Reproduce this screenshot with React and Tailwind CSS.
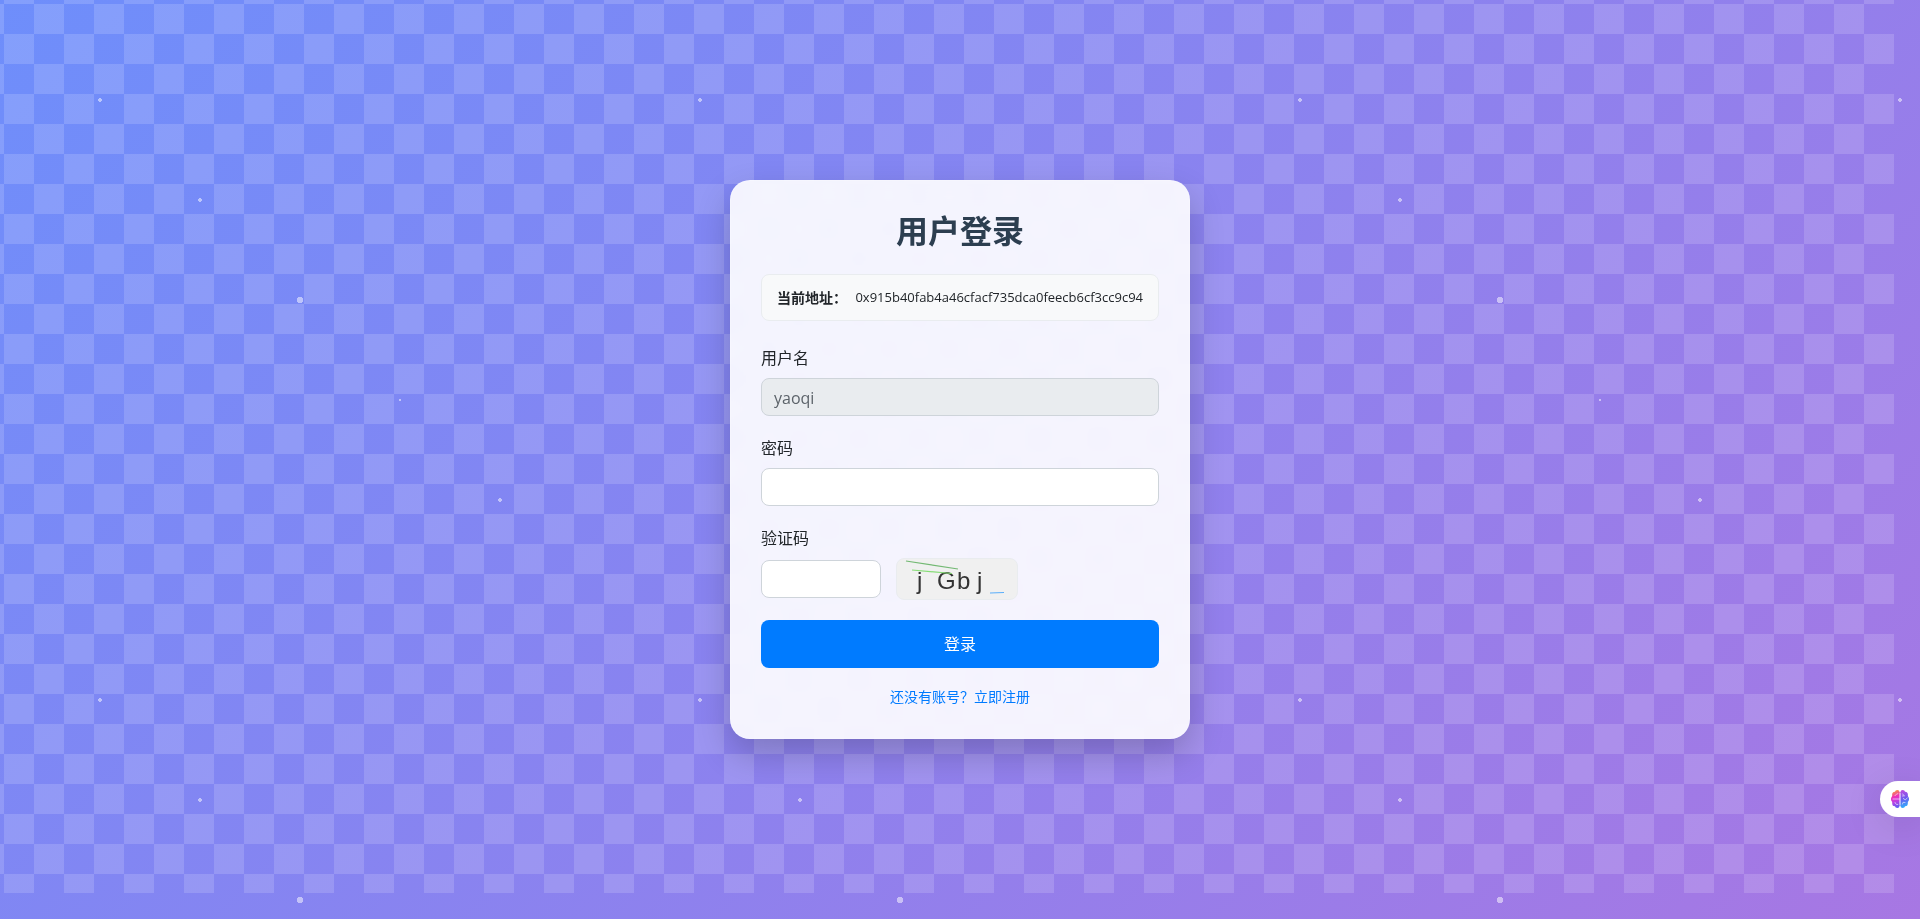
import React from 'react';

function Backdrop() {
  return (
    <div aria-hidden="true" className="pointer-events-none absolute inset-0 overflow-hidden">
      <div className="absolute inset-0 -translate-x-[26px] -translate-y-[26px] bg-[repeating-conic-gradient(#ffffff26_0_25%,transparent_0_50%)] bg-size-[60px_60px]" />
      <div className="absolute inset-0 bg-[radial-gradient(circle_at_100px_100px,#ffffff80_2px,transparent_2px),radial-gradient(circle_at_200px_200px,#ffffff80_2px,transparent_2px),radial-gradient(circle_at_300px_300px,#ffffff80_3px,transparent_3px),radial-gradient(circle_at_400px_400px,#ffffff80_1px,transparent_1px),radial-gradient(circle_at_500px_500px,#ffffff80_2px,transparent_2px)] bg-size-[600px_600px]" />
    </div>
  );
}

function Field({ id, label, children }) {
  return (
    <div className="mb-5">
      <label htmlFor={id} className="mb-2 block text-base leading-6">{label}</label>
      {children}
    </div>
  );
}

const inputStyle = 'h-[38px] rounded-lg border border-[#ced4da] px-3 pt-0.5 text-base outline-none';

function Captcha() {
  return (
    <svg role="img" aria-label="验证码图片" viewBox="0 0 120 40" className="h-[42px] w-[122px] rounded-lg border border-[#e9ecef] bg-[#f0f0f0]">
      <g fill="#333" fontFamily="Liberation Sans, Arial, sans-serif" fontSize="24">
        <text x="20" y="30">j</text>
        <text x="40" y="30">G</text>
        <text x="60" y="30">b</text>
        <text x="80" y="30">j</text>
      </g>
      <path d="M9 2 61 10" stroke="#73b973" strokeWidth="1.2" fill="none" />
      <path d="M15 11 55 14.500" stroke="#86dc76" strokeWidth="1.2" fill="none" />
      <path d="M93 34 107 33.500" stroke="#5aaefa" strokeWidth="1.2" fill="none" />
    </svg>
  );
}

function BrainIcon() {
  return (
    <svg viewBox="0 0 18 18" className="size-[18px]" aria-hidden="true">
      <defs>
        <linearGradient id="brainLeft" gradientUnits="userSpaceOnUse" x1="2" y1="1" x2="8" y2="17">
          <stop offset="0" stopColor="#f79a3c" />
          <stop offset="0.35" stopColor="#ef2fb8" />
          <stop offset="0.6" stopColor="#c43fe0" />
          <stop offset="1" stopColor="#5c5cf4" />
        </linearGradient>
        <linearGradient id="brainRight" gradientUnits="userSpaceOnUse" x1="10" y1="1" x2="15" y2="17">
          <stop offset="0" stopColor="#b94be0" />
          <stop offset="0.5" stopColor="#6a5cf0" />
          <stop offset="1" stopColor="#2fb0fb" />
        </linearGradient>
      </defs>
      <g fill="url(#brainLeft)">
        <path d="M8.500 2v14L5 17 2 14.500.7 11V7L2 3.500 5 1z" />
        <circle cx="6.300" cy="2.300" r="2.200" />
        <circle cx="3.800" cy="4.300" r="2.500" />
        <circle cx="2.600" cy="9" r="2.600" />
        <circle cx="3.800" cy="13.700" r="2.500" />
        <circle cx="6.300" cy="15.700" r="2.200" />
      </g>
      <g fill="url(#brainRight)">
        <path d="M9.500 2v14L13 17 16 14.500 17.300 11V7L16 3.500 13 1z" />
        <circle cx="11.700" cy="2.300" r="2.200" />
        <circle cx="14.200" cy="4.300" r="2.500" />
        <circle cx="15.400" cy="9" r="2.600" />
        <circle cx="14.200" cy="13.700" r="2.500" />
        <circle cx="11.700" cy="15.700" r="2.200" />
      </g>
      <g fill="none" stroke="#fff" strokeWidth="0.8" strokeLinecap="round" strokeLinejoin="round" opacity="0.75">
        <path d="M2 9h6.500" />
        <path d="M4 5.500C4.500 4.300 5.800 4.500 7 3.500" />
        <path d="M4 12.500c.2 1.400 1.300 2.300 2.800 2" />
        <path d="M11.500 4 13.500 5.800 11.500 6" />
        <path d="M12.300 8.500 14.200 9.800 16.300 8" />
        <path d="M11.500 14 12 12.300 14 12.500" />
      </g>
    </svg>
  );
}

export default function App() {
  return (
    <main className="relative flex min-h-screen items-center justify-center overflow-hidden bg-linear-[135deg,#6e8efb,#a777e3] font-['Open_Sans','Noto_Sans_CJK_SC',sans-serif] text-[#212529]">
      <Backdrop />
      <section className="relative w-full max-w-[460px] rounded-[20px] border border-white/20 bg-white/90 p-[30px] shadow-[0_15px_35px_rgba(0,0,0,0.2)] backdrop-blur-[10px]">
        <h1 className="mb-[23px] text-center text-[32px] leading-10 font-bold text-[#2c3e50]">用户登录</h1>
        <p className="mb-[25px] flex justify-between rounded-lg border border-[#e9ecef] bg-[#f8f9fa] px-[15px] py-3 text-sm leading-[21px] whitespace-nowrap">
          <strong className="font-bold">当前地址：</strong>
          <span className="text-[13px]">0x915b40fab4a46cfacf735dca0feecb6cf3cc9c94</span>
        </p>
        <form onSubmit={(event) => event.preventDefault()}>
          <Field id="username" label="用户名">
            <input id="username" type="text" readOnly value="yaoqi" className={`${inputStyle} w-full bg-[#e9ecef] text-[#5c636a]`} />
          </Field>
          <Field id="password" label="密码">
            <input id="password" type="password" className={`${inputStyle} w-full bg-white`} />
          </Field>
          <Field id="captcha" label="验证码">
            <div className="flex items-center gap-[15px]">
              <input id="captcha" type="text" className={`${inputStyle} w-[120px] bg-white`} />
              <Captcha />
            </div>
          </Field>
          <button type="submit" className="h-12 w-full rounded-lg bg-[#007bff] text-base text-white">登录</button>
        </form>
        <div className="mt-[19px] pb-px text-center text-sm leading-5">
          <a href="#register" className="text-[#007bff]">还没有账号？立即注册</a>
        </div>
      </section>
      <button type="button" aria-label="助手" className="absolute right-0 bottom-[102px] flex h-9 w-10 items-center rounded-l-full bg-white pl-[11px] shadow-[0_8px_40px_rgba(0,0,0,0.12)]">
        <BrainIcon />
      </button>
    </main>
  );
}
